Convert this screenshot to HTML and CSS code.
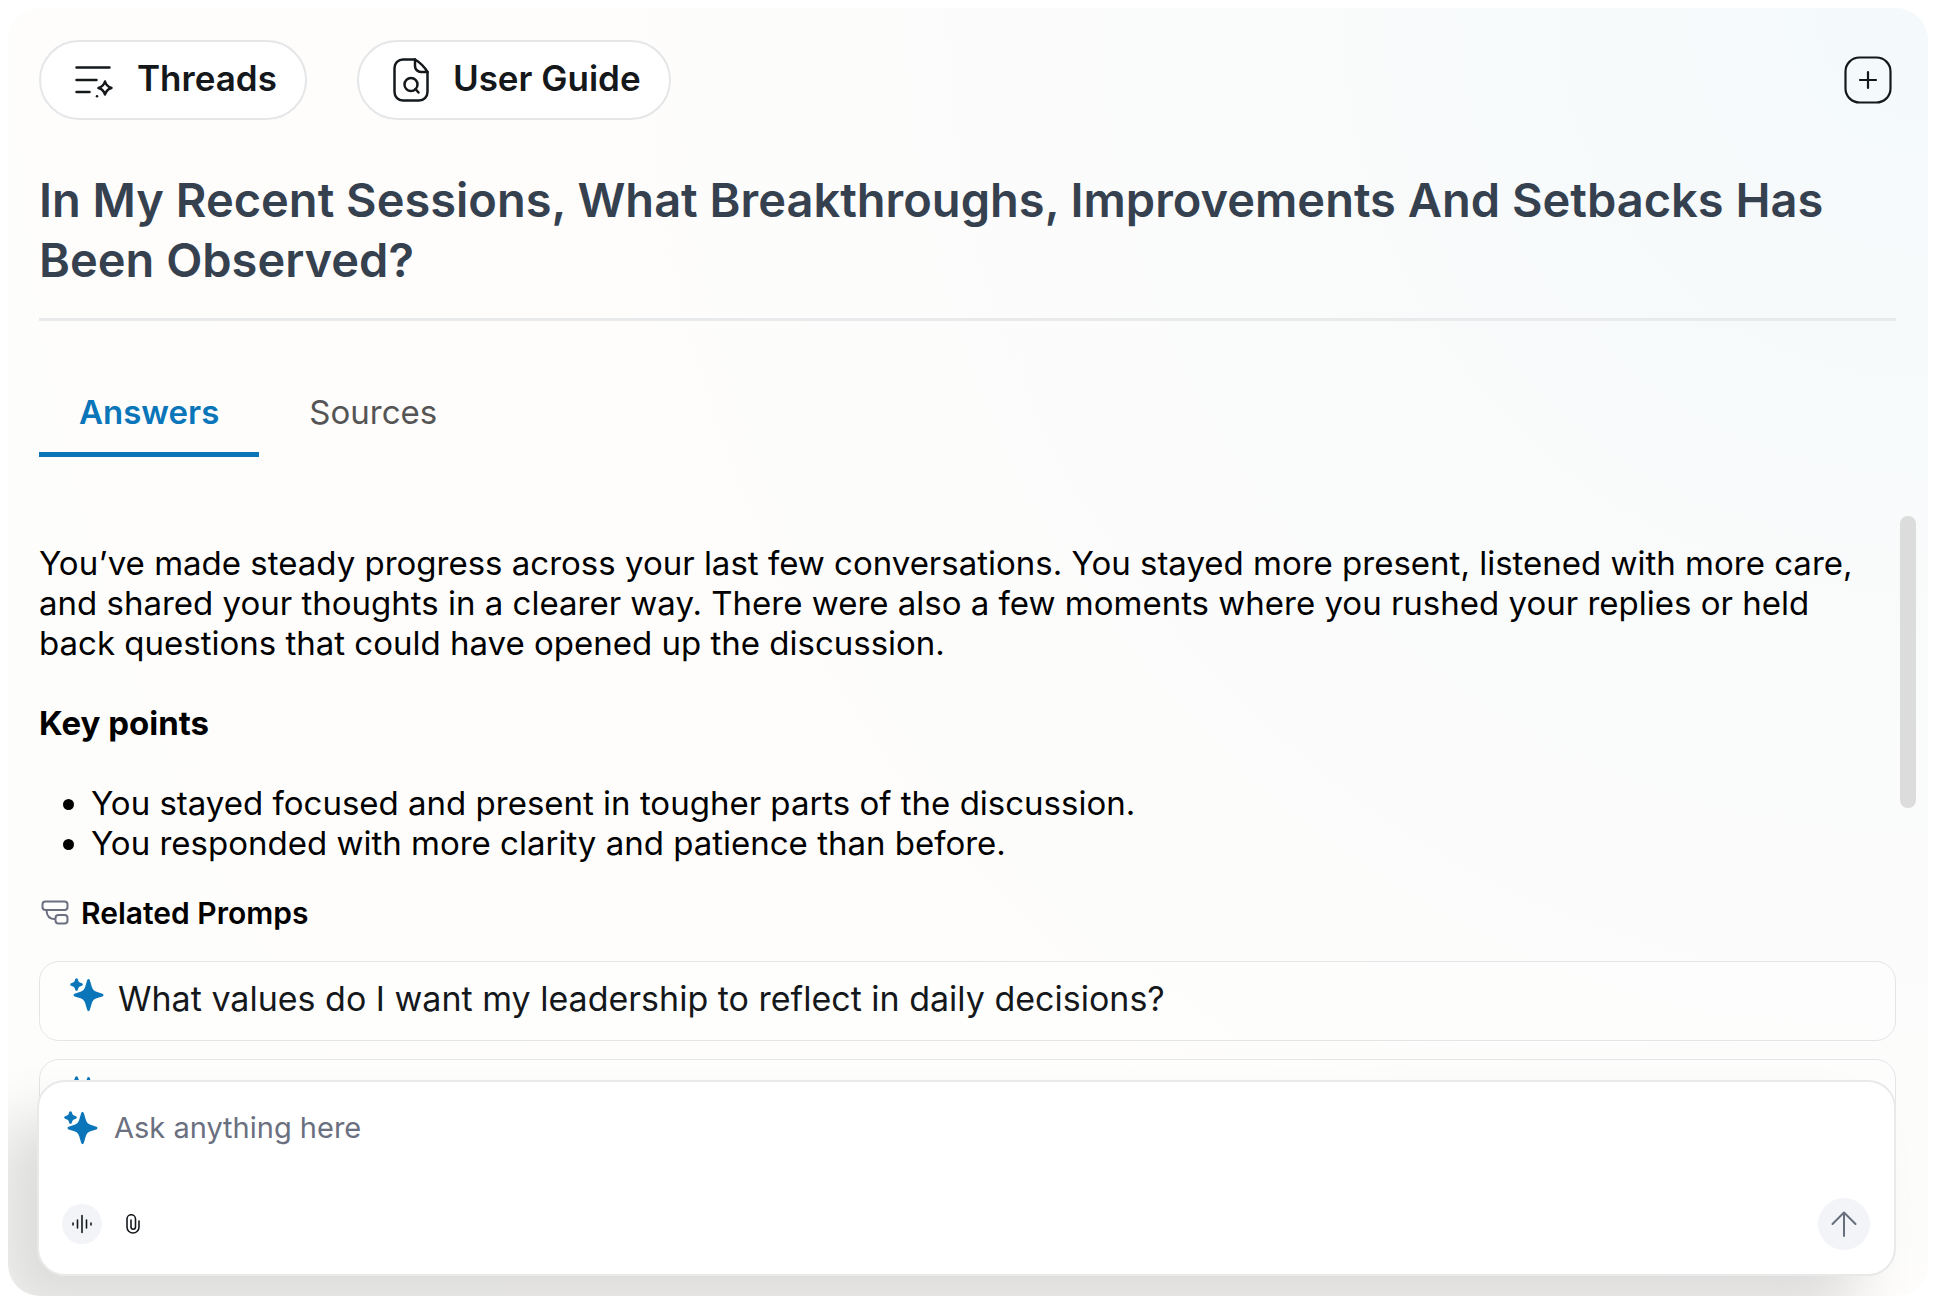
FILE: index.html
```
<!DOCTYPE html>
<html lang="en">
<head>
    <meta charset="UTF-8">
    <meta name="viewport" content="width=device-width, initial-scale=1">
    <title>Threads</title>
    <link rel="stylesheet" href="styles.css">
</head>
<body>
<svg class="symbols" aria-hidden="true">
    <symbol id="sparkle" viewBox="0 0 34 34">
        <path d="M17.200 2c.5-1.500 2.200-1.500 2.600 0l2 6.800c.8 2.600 2.300 4.100 4.700 5l5.900 1.900c1.500.6 1.500 2.100 0 2.700l-5.900 1.900c-2.400.9-3.900 2.400-4.700 5l-2 6.800c-.4 1.500-2.100 1.500-2.600 0l-2-6.800c-.8-2.600-2.300-4.100-4.700-5l-5.900-1.900c-1.500-.6-1.500-2.100 0-2.700l5.900-1.900c2.400-.9 3.900-2.400 4.700-5z"/>
        <path stroke="#fff" stroke-width="3" paint-order="stroke" d="M5.300 1.100c.4-1.200 2-1.200 2.400 0l.7 1.900c.3.800.8 1.300 1.600 1.600l1.900.7c1.200.5 1.200 1.900 0 2.400l-1.900.7c-.8.300-1.300.8-1.600 1.600l-.7 1.900c-.4 1.200-2 1.200-2.400 0l-.7-1.900c-.3-.8-.8-1.300-1.600-1.600l-1.900-.7c-1.200-.5-1.200-1.900 0-2.400l1.900-.7c.8-.3 1.300-.8 1.600-1.600z"/>
    </symbol>
</svg>

<main class="panel">
    <header class="header">
        <button class="pill" type="button">
            <svg width="38" height="40" viewBox="0 0 38 40" fill="none" stroke="#15181b" stroke-width="2.500" stroke-linecap="round" stroke-linejoin="round">
                <path d="M1.500 7.500h33M1.500 20h20M1.500 32h13"/>
                <path d="M30 21.500c1 3.500 3 5.500 6.500 6.500-3.500 1-5.500 3-6.500 6.500-1-3.500-3-5.500-6.500-6.500 3.500-1 5.500-3 6.500-6.500z"/>
                <path d="M22 36.200v.1"/>
            </svg>
            Threads
        </button>
        <button class="pill" type="button">
            <svg width="36" height="44" viewBox="0 0 36 44" fill="none" stroke="#15181b" stroke-width="2.500" stroke-linecap="round" stroke-linejoin="round">
                <path d="M22 1.500H10a8.500 8.500 0 0 0-8.500 8.500v24a8.500 8.500 0 0 0 8.500 8.500h16a8.500 8.500 0 0 0 8.500-8.500V14c-3-5-7.500-9.500-12.500-12.500z"/>
                <path d="M22 1.500V8a6 6 0 0 0 6 6h6.500"/>
                <circle cx="18" cy="26.500" r="6.500"/>
                <path d="M22.500 31l3 3.500"/>
            </svg>
            User Guide
        </button>
        <button class="new-thread" type="button" aria-label="New thread">
            <svg width="48" height="48" viewBox="0 0 48 48" fill="none" stroke="#15181b" stroke-width="2.200" stroke-linecap="round">
                <rect x="1.500" y="1.500" width="45" height="45" rx="14"/>
                <path d="M24 16v16M16 24h16"/>
            </svg>
        </button>
    </header>

    <h1 class="title">In My Recent Sessions, What Breakthroughs, Improvements And Setbacks Has Been Observed?</h1>

    <div class="tabs" role="tablist">
        <button class="tab tab-active" type="button" role="tab" aria-selected="true">Answers</button>
        <button class="tab" type="button" role="tab" aria-selected="false">Sources</button>
    </div>

    <section class="content">
        <div class="answer">
            <p>You’ve made steady progress across your last few conversations. You stayed more present, listened with more care, and shared your thoughts in a clearer way. There were also a few moments where you rushed your replies or held back questions that could have opened up the discussion.</p>
            <h2>Key points</h2>
            <ul>
                <li>You stayed focused and present in tougher parts of the discussion.</li>
                <li>You responded with more clarity and patience than before.</li>
            </ul>
        </div>

        <h3 class="related">
            <svg width="30" height="26" viewBox="0 0 30 26" fill="none" stroke="#6b7080" stroke-width="2">
                <rect x="3.500" y="1.500" width="25" height="8.500" rx="3"/>
                <rect x="16.500" y="15" width="12" height="8.500" rx="3"/>
                <path d="M7.500 10c0 6 3 9.200 9 9.200"/>
            </svg>
            Related Promps
        </h3>
        <div class="prompts">
            <button class="prompt" type="button">
                <svg class="sparkle" width="34" height="34"><use href="#sparkle"/></svg>
                What values do I want my leadership to reflect in daily decisions?
            </button>
            <button class="prompt" type="button" aria-label="Next prompt">
                <svg class="sparkle" width="34" height="34"><use href="#sparkle"/></svg>
            </button>
        </div>
        <div class="scroll-thumb"></div>
    </section>

    <form class="composer">
        <div class="composer-input">
            <svg class="sparkle" width="34" height="34"><use href="#sparkle"/></svg>
            <textarea rows="1" placeholder="Ask anything here" aria-label="Ask anything here"></textarea>
        </div>
        <div class="composer-actions">
            <button class="voice" type="button" aria-label="Voice input">
                <svg width="20" height="20" viewBox="0 0 20 20" fill="none" stroke="#15181b" stroke-width="1.600" stroke-linecap="round">
                    <path d="M1 9v2M5.500 6v8M10 1.500v17M14.500 6v8M19 9v2"/>
                </svg>
            </button>
            <button class="attach" type="button" aria-label="Attach file">
                <svg width="14" height="20" viewBox="0 0 14 20" fill="none" stroke="#15181b" stroke-width="1.600" stroke-linecap="round">
                    <path d="M13 7v6a6 6 0 0 1-12 0V5a4.200 4.200 0 0 1 8.500 0v8a2.200 2.200 0 0 1-4.500 0V6"/>
                </svg>
            </button>
            <button class="send" type="submit" aria-label="Send">
                <svg width="26" height="26" viewBox="0 0 26 26" fill="none" stroke="#676e7c" stroke-width="2" stroke-linecap="round" stroke-linejoin="round">
                    <path d="M13 25V1.500M1.500 13L13 1.500 24.500 13"/>
                </svg>
            </button>
        </div>
    </form>
</main>
</body>
</html>
```
FILE: styles.css
```
* {
    box-sizing: border-box;
}
body {
    margin: 0;
    padding: 8px;
    height: 100vh;
    background: #fff;
    color: #000;
    font-family: Inter, "Liberation Sans", sans-serif;
    font-size: 33px;
    line-height: 40px;
}
button {
    margin: 0;
    padding: 0;
    border: none;
    background: none;
    color: inherit;
    font: inherit;
    cursor: pointer;
}
svg {
    display: block;
    flex: none;
}
.symbols {
    position: absolute;
    width: 0;
    height: 0;
}
.panel {
    position: relative;
    display: flex;
    flex-direction: column;
    height: 100%;
    padding: 32px 32px 0 31px;
    border-radius: 32px;
    background: radial-gradient(circle at 100% 0, #f4f9fb 0%, #fafbfb 30%, #fefdfc 60%, #fdfdfc 100%);
    overflow: hidden;
}

/* top bar */
.header {
    display: flex;
    align-items: center;
    gap: 50px;
}
.pill {
    display: flex;
    align-items: center;
    gap: 24px;
    height: 80px;
    padding: 0 28px 4px 34px;
    border: 2px solid #e5e6e8;
    border-radius: 40px;
    background: #fff;
    color: #15181b;
    font-size: 35px;
    font-weight: 600;
}
.pill svg {
    margin-top: 4px;
}
.new-thread {
    margin-left: auto;
    margin-right: 4px;
}
.title {
    margin: 50px 0 0;
    padding-bottom: 28px;
    border-bottom: 3px solid #e8eaec;
    color: #364150;
    font-size: 47px;
    font-weight: 600;
    line-height: 60px;
}

/* tabs */
.tabs {
    display: flex;
    gap: 10px;
    margin-top: 61px;
}
.tab {
    padding: 10px 40px 20px;
    border-bottom: 5px solid transparent;
    color: #555;
}
.tab-active {
    border-color: #0a76b9;
    color: #0a76b9;
    font-weight: 600;
}

/* answer text and related prompts */
.content {
    position: relative;
    flex: 1;
    min-height: 0;
    margin-top: 59px;
    padding-top: 27px;
}
.answer p {
    margin: 0;
    padding-right: 16px;
}
.answer h2 {
    margin: 40px 0;
    font-size: 33px;
    font-weight: 700;
    line-height: 40px;
}
.answer ul {
    margin: 0;
    padding-left: 52px;
}
.related {
    display: flex;
    align-items: center;
    gap: 12px;
    margin: 30px 0 28px;
    font-size: 30px;
    font-weight: 600;
    line-height: 40px;
}
.prompts {
    display: grid;
    gap: 18px;
}
.prompt {
    display: flex;
    align-items: center;
    gap: 14px;
    height: 80px;
    padding: 0 30px 4px;
    border: 1px solid #e4e5e6;
    border-radius: 20px;
    background: rgba(255, 255, 255, 0.4);
    color: #15181b;
    font-size: 34px;
    text-align: left;
}
.sparkle {
    fill: #0a76b9;
}
.prompt .sparkle {
    margin-bottom: 8px;
}
.scroll-thumb {
    position: absolute;
    top: 0;
    right: -20px;
    width: 16px;
    height: 292px;
    border-radius: 8px;
    background: #dcdcdc;
}

/* message box, floats over the end of the content */
.composer {
    position: absolute;
    left: 29px;
    right: 32px;
    bottom: 20px;
    padding: 24px 24px 24px 23px;
    border: 2px solid #e9e9e9;
    border-radius: 28px;
    background: #fff;
    box-shadow: -40px 40px 60px rgba(0, 0, 0, 0.13);
}
.composer-input {
    display: flex;
    align-items: center;
    gap: 16px;
    height: 44px;
    padding-left: 2px;
}
.composer-input textarea {
    flex: 1;
    height: 40px;
    padding: 0;
    border: none;
    outline: none;
    background: none;
    resize: none;
    font: 29px/40px Inter, "Liberation Sans", sans-serif;
}
.composer-input textarea::placeholder {
    color: #6b7080;
}
.composer-actions {
    display: flex;
    align-items: center;
    gap: 24px;
    margin-top: 48px;
}
.voice,
.send {
    display: flex;
    align-items: center;
    justify-content: center;
    width: 40px;
    height: 40px;
    border-radius: 50%;
    background: #f2f4f8;
}
.send {
    width: 52px;
    height: 52px;
    margin-left: auto;
}
```
